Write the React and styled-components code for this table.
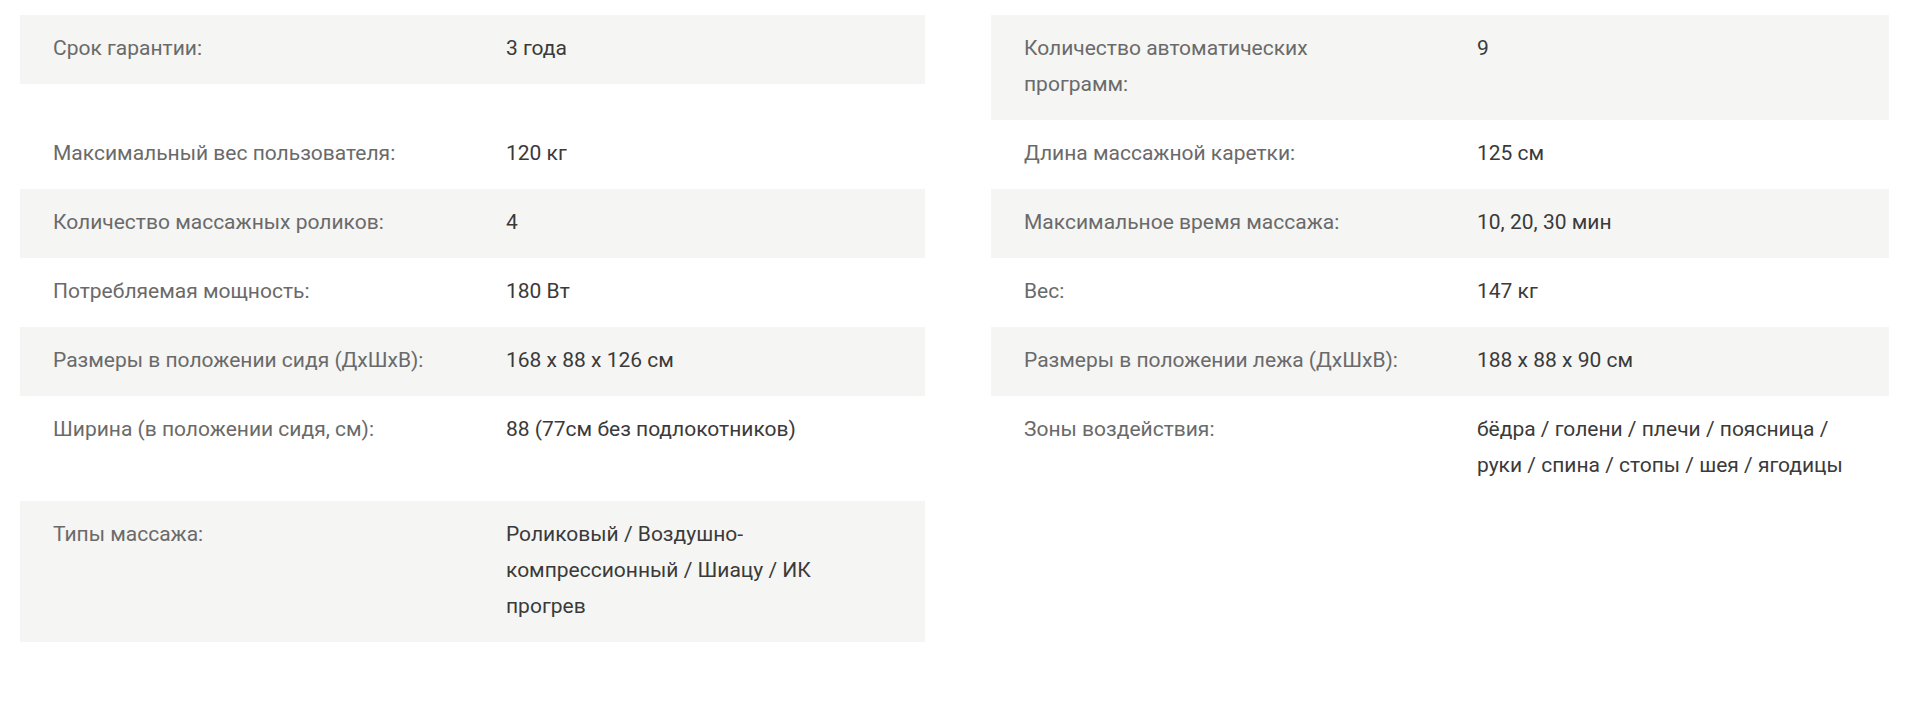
import React from "react";
import styled, { createGlobalStyle } from "styled-components";

const GlobalStyle = createGlobalStyle`
  body {
    margin: 0;
    background: #ffffff;
    font-family: Roboto, "Liberation Sans", Arial, sans-serif;
  }
`;

const rows = [
  [
    { label: "Срок гарантии:", value: "3 года" },
    { label: "Количество автоматических программ:", value: "9" },
  ],
  [
    { label: "Максимальный вес пользователя:", value: "120 кг" },
    { label: "Длина массажной каретки:", value: "125 см" },
  ],
  [
    { label: "Количество массажных роликов:", value: "4" },
    { label: "Максимальное время массажа:", value: "10, 20, 30 мин" },
  ],
  [
    { label: "Потребляемая мощность:", value: "180 Вт" },
    { label: "Вес:", value: "147 кг" },
  ],
  [
    { label: "Размеры в положении сидя (ДхШхВ):", value: "168 x 88 x 126 см" },
    { label: "Размеры в положении лежа (ДхШхВ):", value: "188 x 88 x 90 см" },
  ],
  [
    { label: "Ширина (в положении сидя, см):", value: "88 (77см без подлокотников)" },
    {
      label: "Зоны воздействия:",
      value: "бёдра / голени / плечи / поясница / руки / спина / стопы / шея / ягодицы",
    },
  ],
  [
    {
      label: "Типы массажа:",
      value: "Роликовый / Воздушно-компрессионный / Шиацу / ИК прогрев",
    },
    null,
  ],
];

const Specs = styled.section`
  padding: 15px 31px 40px 20px;
`;

const Row = styled.div`
  display: grid;
  grid-template-columns: 905px 898px;
  column-gap: 66px;
  align-items: start;
`;

const Cell = styled.div`
  display: flex;
  align-items: flex-start;
  padding: 15px 33px 18px;
  background: ${(p) => (p.$striped ? "#f5f5f4" : "transparent")};
  font-size: 21px;
  line-height: 36px;
`;

const Label = styled.div`
  flex: 0 0 386px;
  margin-right: 67px;
  color: #6a6a6a;
`;

const Value = styled.div`
  flex: 1;
  min-width: 0;
  color: #3a3a3a;
`;

const App = () => {
  return (
    <>
      <GlobalStyle />
      <Specs>
        {rows.map((pair, i) => (
          <Row key={i}>
            {pair.map((item, j) =>
              item ? (
                <Cell key={j} $striped={i % 2 === 0}>
                  <Label>{item.label}</Label>
                  <Value>{item.value}</Value>
                </Cell>
              ) : (
                <div key={j} />
              )
            )}
          </Row>
        ))}
      </Specs>
    </>
  );
};

export default App;
